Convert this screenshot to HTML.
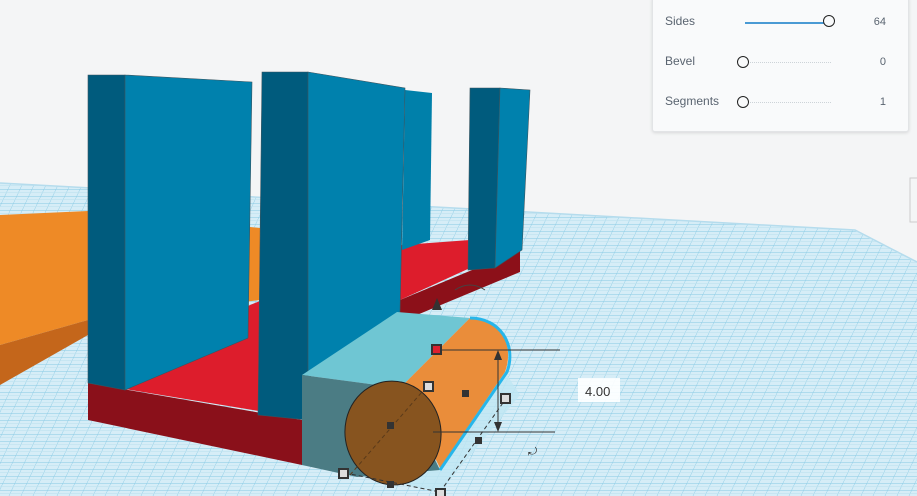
<!DOCTYPE html>
<html><head><style>
body{margin:0;width:917px;height:496px;overflow:hidden;background:#f4f5f6;font-family:"Liberation Sans",sans-serif}
.panel{position:absolute;left:652px;top:-4px;width:255px;height:134px;background:#f9fafb;border:1px solid #e2e4e6;border-radius:3px;box-shadow:0 1px 3px rgba(0,0,0,.12)}
.row{position:absolute;left:12px;font-size:12px;color:#5a6470}
.val{position:absolute;right:22px;font-size:11px;color:#5a6470}
.trk{position:absolute;left:92px;width:86px;height:0;border-top:1px dotted #cdd3d8}
.knob{position:absolute;width:10px;height:10px;border:1.3px solid #222;border-radius:50%;background:#f9fafb}
</style></head><body>
<svg width="917" height="496" style="position:absolute;left:0;top:0">
<defs>
<pattern id="g" width="12" height="7" patternUnits="userSpaceOnUse" patternTransform="skewX(-25)">
<rect width="12" height="7" fill="#d6edf7"/><path d="M0 0H12M0 0V7" stroke="#8fcde6" stroke-width="1"/><path d="M0 3.5H12" stroke="#bfe2f0" stroke-width=".6"/></pattern>
<clipPath id="pl"><polygon points="0,183 855,230 917,262 917,496 0,496"/></clipPath>
</defs>
<rect x="0" y="0" width="917" height="496" fill="url(#g)" clip-path="url(#pl)"/>
<polyline points="0,183 855,230 917,262" fill="none" stroke="#b5dced" stroke-width="1.5"/>
<polygon points="0,215 88,211 260,228 260,300 88,320 0,345" fill="#ee8a26"/>
<polygon points="0,345 88,320 88,335 0,385" fill="#c4661b"/>
<polygon points="100,385 265,412 400,300 470,268 520,250 470,240 402,245 250,305" fill="#dd1d2c"/>
<polygon points="400,300 520,250 520,272 400,322" fill="#8c1019"/>
<polygon points="88,383 302,420 302,465 88,420" fill="#8a101a"/>
<polygon points="405,90 432,93 430,240 402,250" fill="#0080aa"/>
<polygon points="88,75 125,75 125,390 88,383" fill="#005b7d" stroke="#3a5560" stroke-width=".6"/>
<polygon points="125,75 252,82 248,338 125,390" fill="#0081ad" stroke="#3a5560" stroke-width=".6"/>
<polygon points="470,88 500,88 495,268 468,270" fill="#005b7d" stroke="#3a5560" stroke-width=".6"/>
<polygon points="500,88 530,90 522,250 495,268" fill="#0081ad" stroke="#3a5560" stroke-width=".6"/>
<polygon points="262,72 308,72 308,420 258,415" fill="#005b7d" stroke="#3a5560" stroke-width=".6"/>
<polygon points="308,72 405,88 400,312 308,378" fill="#0081ad" stroke="#3a5560" stroke-width=".6"/>
<polygon points="345,472 440,492 520,395 505,372" fill="#bfe6f2" opacity=".8"/>
<polygon points="302,375 397,312 470,318 400,388" fill="#6fc6d3"/>
<polygon points="302,375 400,388 440,470 357,477 302,465" fill="#4b7c84"/>
<path d="M400,388 L470,318 C500,318 515,345 505,372 L440,468 Z" fill="#ea8d3a"/>
<path d="M470,318 C500,318 517,345 507,372 L440,470" fill="none" stroke="#27b6ea" stroke-width="3"/>
<ellipse cx="393" cy="433" rx="48" ry="52" transform="rotate(-8 393 433)" fill="#87541f" stroke="#222" stroke-width="1"/>
<g stroke="#333" stroke-width="1" fill="none">
<line x1="438" y1="350" x2="560" y2="350"/><line x1="433" y1="432" x2="555" y2="432"/>
<line x1="498" y1="355" x2="498" y2="428"/>
<line x1="345" y1="473" x2="440" y2="492" stroke-dasharray="4 3"/>
<line x1="440" y1="492" x2="505" y2="400" stroke-dasharray="4 3"/>
<line x1="350" y1="475" x2="428" y2="385" stroke-dasharray="4 3" stroke="#5a3a1a"/>
</g>
<polygon points="498,350 494,360 502,360" fill="#333"/><polygon points="498,432 494,422 502,422" fill="#333"/>
<polygon points="437,298 432,310 442,310" fill="#333"/>
<path d="M455,290 Q470,280 485,290" stroke="#444" fill="none"/>
<g stroke="#333" stroke-width="2" fill="#ddd">
<rect x="432" y="345" width="9" height="9" fill="#dd2030"/>
<rect x="424" y="382" width="9" height="9"/><rect x="501" y="394" width="9" height="9"/>
<rect x="339" y="469" width="9" height="9"/><rect x="436" y="489" width="9" height="9"/>
</g>
<g fill="#333"><rect x="387" y="422" width="7" height="7"/><rect x="462" y="390" width="7" height="7"/><rect x="475" y="437" width="7" height="7"/><rect x="387" y="481" width="7" height="7"/></g>
<rect x="578" y="378" width="42" height="24" fill="#fff" opacity=".9"/>
<text x="585" y="396" font-size="13" fill="#333" font-family="Liberation Sans">4.00</text>
<text x="528" y="455" font-size="11" fill="#333">⤾</text>
<rect x="910" y="178" width="10" height="44" fill="#f4f5f6" stroke="#ccc"/>
</svg>
<div class="panel">
<div class="row" style="top:17px">Sides</div><div class="val" style="top:19px">64</div>
<div class="trk" style="top:25px;border-top:2px solid #4a9ad4;width:82px"></div><div class="knob" style="left:170px;top:18px"></div>
<div class="row" style="top:57px">Bevel</div><div class="val" style="top:59px">0</div>
<div class="trk" style="top:65px"></div><div class="knob" style="left:84px;top:59px"></div>
<div class="row" style="top:97px">Segments</div><div class="val" style="top:99px">1</div>
<div class="trk" style="top:105px"></div><div class="knob" style="left:84px;top:99px"></div>
</div>
</body></html>
